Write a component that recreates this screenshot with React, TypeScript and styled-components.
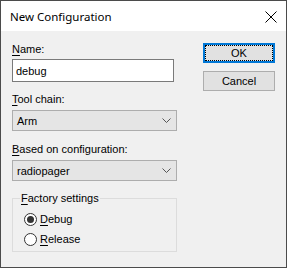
import React, {useState} from 'react';
import styled, {createGlobalStyle} from "styled-components";

const GlobalStyle = createGlobalStyle`
  html, body {
    margin: 0;
    padding: 0;
    background: #f0f0f0;
  }
`

const Chevron = () => (
    <svg width="9" height="5" viewBox="0 0 9 5">
        <polyline points="0.5,0.5 4.5,4.5 8.5,0.5" fill="none" stroke="#555" strokeWidth="1"/>
    </svg>
)

const CloseIcon = () => (
    <svg width="12" height="12" viewBox="0 0 12 12">
        <path d="M0.5 0.5 L11.5 11.5 M11.5 0.5 L0.5 11.5" stroke="#000" strokeWidth="1" fill="none"/>
    </svg>
)

const Combo = ({value}: { value: string }) => (
    <Select>
        <span>{value}</span>
        <Chevron/>
    </Select>
)

export default function App() {
    const [name, setName] = useState('debug');
    const [mode, setMode] = useState<'debug' | 'release'>('debug');

    return (
        <>
            <GlobalStyle/>
            <Window>
                <TitleBar>
                    <Title>New Configuration</Title>
                    <CloseButton><CloseIcon/></CloseButton>
                </TitleBar>
                <Body>
                    <Form>
                        <Label><u>N</u>ame:</Label>
                        <TextBox value={name} onChange={e => setName(e.target.value)}/>
                        <Label $gap={11}><u>T</u>ool chain:</Label>
                        <Combo value="Arm"/>
                        <Label $gap={12}><u>B</u>ased on configuration:</Label>
                        <Combo value="radiopager"/>
                        <Group>
                            <Legend><u>F</u>actory settings</Legend>
                            <RadioRow onClick={() => setMode('debug')}>
                                <RadioDot $checked={mode === 'debug'}/>
                                <span><u>D</u>ebug</span>
                            </RadioRow>
                            <RadioRow onClick={() => setMode('release')}>
                                <RadioDot $checked={mode === 'release'}/>
                                <span><u>R</u>elease</span>
                            </RadioRow>
                        </Group>
                    </Form>
                    <Buttons>
                        <Button $primary>OK</Button>
                        <Button>Cancel</Button>
                    </Buttons>
                </Body>
            </Window>
        </>
    );
}

const Window = styled.div`
  width: 287px;
  height: 268px;
  box-sizing: border-box;
  border: 1px solid #4b4b4b;
  display: flex;
  flex-direction: column;
  font-family: "Liberation Sans", Arial, sans-serif;
  font-size: 11px;
  color: #000;
`

const TitleBar = styled.div`
  height: 30px;
  background: #fff;
  display: flex;
  align-items: center;
  justify-content: space-between;
  padding: 0 9px 0 9px;
`

const Title = styled.span`
  font-family: "Noto Sans", sans-serif;
  font-size: 11.5px;
  margin-top: 1px;
`

const CloseButton = styled.span`
  display: flex;
  width: 12px;
  height: 12px;
  margin-top: 1px;
`

const Body = styled.div`
  flex: 1;
  background: #f0f0f0;
  display: flex;
  justify-content: space-between;
  padding: 12px 11px 0 11px;

  & u {
    text-underline-offset: 2px;
  }
`

const Form = styled.div`
  width: 165px;
  display: flex;
  flex-direction: column;
`

const Label = styled.label<{ $gap?: number }>`
  display: block;
  height: 13px;
  line-height: 13px;
  margin-top: ${props => props.$gap ?? 0}px;
  margin-bottom: 3px;
`

const TextBox = styled.input`
  width: 162px;
  height: 23px;
  box-sizing: border-box;
  border: 1px solid #7a7a7a;
  background: #fff;
  padding: 0 0 0 3px;
  margin: 0;
  font-family: inherit;
  font-size: 11px;
  color: #000;
  outline: none;
`

const Select = styled.div`
  height: 21px;
  box-sizing: border-box;
  border: 1px solid #adadad;
  background: #e5e5e5;
  display: flex;
  align-items: center;
  justify-content: space-between;
  padding: 0 5px 0 4px;
  margin-top: 1px;
`

const Group = styled.fieldset`
  margin: 11px 0 0 0;
  padding: 4px 0 3px 11px;
  border: 1px solid #dcdcdc;
  height: 60px;
  box-sizing: border-box;
`

const Legend = styled.legend`
  padding: 0 1px;
  margin-left: -4px;
  line-height: 13px;
  height: 13px;
`

const RadioRow = styled.div`
  display: flex;
  align-items: center;
  gap: 3px;
  height: 20px;
  cursor: default;
`

const RadioDot = styled.span<{ $checked?: boolean }>`
  width: 13px;
  height: 13px;
  box-sizing: border-box;
  border: 1px solid #333;
  border-radius: 50%;
  background: #fff;
  display: flex;
  align-items: center;
  justify-content: center;

  &::after {
    content: "";
    width: 7px;
    height: 7px;
    border-radius: 50%;
    background: #333;
    display: ${props => props.$checked ? 'block' : 'none'};
  }
`

const Buttons = styled.div`
  width: 72px;
  display: flex;
  flex-direction: column;
  gap: 8px;
`

const Button = styled.button<{ $primary?: boolean }>`
  position: relative;
  height: 20px;
  box-sizing: border-box;
  margin: 0;
  padding: 0;
  background: #e1e1e1;
  border: ${props => props.$primary ? '2px solid #0078d7' : '1px solid #adadad'};
  font-family: inherit;
  font-size: 11px;
  color: #000;
  outline: ${props => props.$primary ? '1px dotted #000' : 'none'};
  outline-offset: -3px;
`
